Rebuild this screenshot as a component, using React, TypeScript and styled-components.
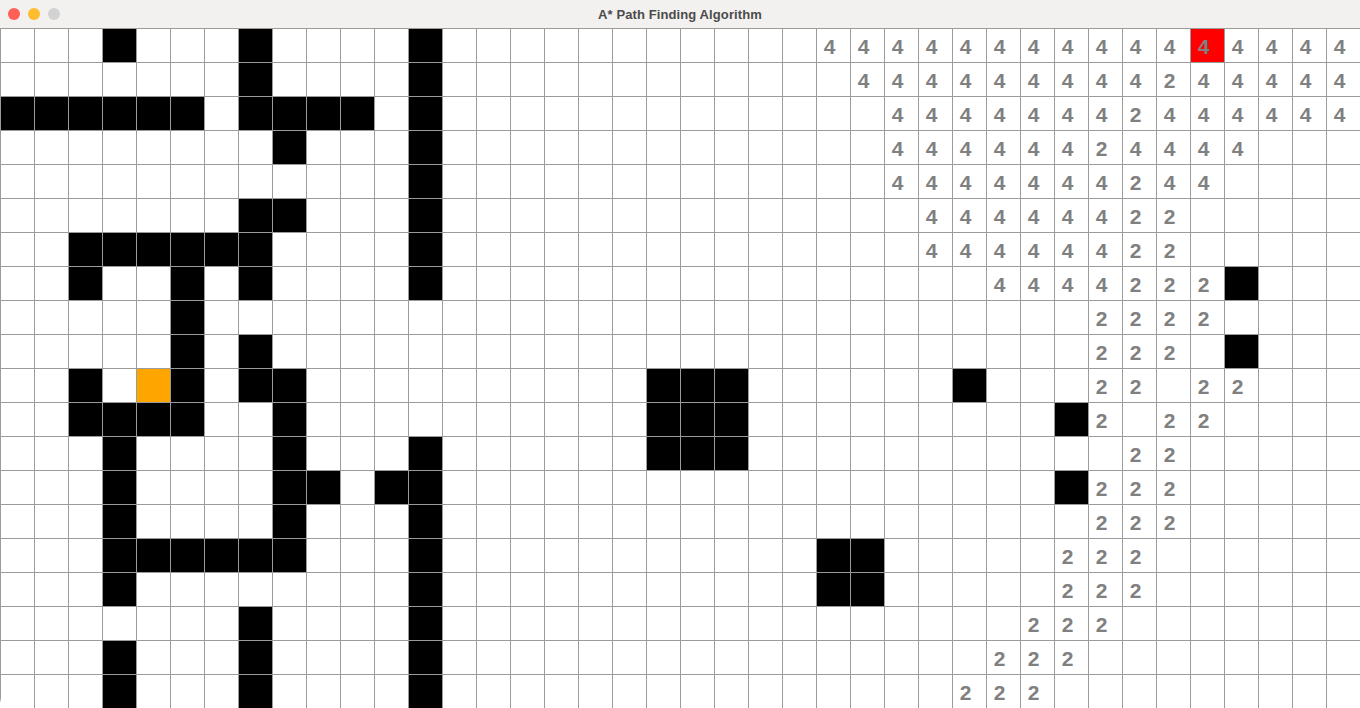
import React from "react";
import styled, { createGlobalStyle } from "styled-components";

const GlobalStyle = createGlobalStyle`
  html, body { margin: 0; padding: 0; background: #ffffff; overflow: hidden; }
  * { box-sizing: border-box; }
`;

const COLS = 40;
const ROWS = 20;

type Kind = "empty" | "wall" | "start" | "goal";

const walls: Record<number, number[]> = {
  0: [3, 7, 12],
  1: [7, 12],
  2: [0, 1, 2, 3, 4, 5, 7, 8, 9, 10, 12],
  3: [8, 12],
  4: [12],
  5: [7, 8, 12],
  6: [2, 3, 4, 5, 6, 7, 12],
  7: [2, 5, 7, 12, 36],
  8: [5],
  9: [5, 7, 36],
  10: [2, 5, 7, 8, 19, 20, 21, 28],
  11: [2, 3, 4, 5, 8, 19, 20, 21, 31],
  12: [3, 8, 12, 19, 20, 21],
  13: [3, 8, 9, 11, 12, 31],
  14: [3, 8, 12],
  15: [3, 4, 5, 6, 7, 8, 12, 24, 25],
  16: [3, 12, 24, 25],
  17: [7, 12],
  18: [3, 7, 12],
  19: [3, 7, 12],
};

const range = (a: number, b: number) => Array.from({ length: b - a + 1 }, (_, i) => a + i);

const fours: Record<number, number[]> = {
  0: range(24, 39),
  1: [...range(25, 33), ...range(35, 39)],
  2: [...range(26, 32), ...range(34, 39)],
  3: [...range(26, 31), ...range(33, 36)],
  4: [...range(26, 32), 34, 35],
  5: range(27, 32),
  6: range(27, 32),
  7: range(29, 32),
};

const twos: Record<number, number[]> = {
  1: [34],
  2: [33],
  3: [32],
  4: [33],
  5: [33, 34],
  6: [33, 34],
  7: [33, 34, 35],
  8: [32, 33, 34, 35],
  9: [32, 33, 34],
  10: [32, 33, 35, 36],
  11: [32, 34, 35],
  12: [33, 34],
  13: [32, 33, 34],
  14: [32, 33, 34],
  15: [31, 32, 33],
  16: [31, 32, 33],
  17: [30, 31, 32],
  18: [29, 30, 31],
  19: [28, 29, 30],
};

const Window = styled.div`
  width: 100vw;
  height: 100vh;
  display: flex;
  flex-direction: column;
  background: #ffffff;
  border-radius: 0 0 10px 10px;
  overflow: hidden;
`;

const TitleBar = styled.div`
  position: relative;
  height: 28px;
  flex: 0 0 28px;
  display: flex;
  align-items: center;
  justify-content: center;
  background: #f2f1f0;
`;

const Lights = styled.div`
  position: absolute;
  left: 8px;
  top: 8px;
  display: flex;
  gap: 8px;
`;

const Light = styled.span<{ $color: string }>`
  width: 12px;
  height: 12px;
  border-radius: 50%;
  background: ${(p) => p.$color};
`;

const Title = styled.div`
  font-family: "Liberation Sans", Arial, sans-serif;
  font-weight: 700;
  font-size: 13px;
  color: #4b4b4b;
  letter-spacing: 0.1px;
`;

const Board = styled.div`
  display: grid;
  grid-template-columns: repeat(${COLS}, 34px);
  grid-auto-rows: 34px;
`;

const bg: Record<Kind, string> = {
  empty: "#ffffff",
  wall: "#000000",
  start: "#ffa500",
  goal: "#ff0000",
};

const Cell = styled.div<{ $kind: Kind }>`
  border-left: 1px solid #9b9b9b;
  border-top: 1px solid #9b9b9b;
  background: ${(p) => bg[p.$kind]};
  display: flex;
  align-items: center;
  justify-content: center;
  font-family: "Liberation Sans", Arial, sans-serif;
  font-weight: 700;
  font-size: 21px;
  line-height: 1;
  color: #808080;
  padding-top: 2px;
  padding-right: 8px;
`;

export default function App() {
  const cells: React.ReactNode[] = [];
  for (let r = 0; r < ROWS; r++) {
    for (let c = 0; c < COLS; c++) {
      let kind: Kind = "empty";
      if (walls[r]?.includes(c)) kind = "wall";
      if (r === 10 && c === 4) kind = "start";
      if (r === 0 && c === 35) kind = "goal";
      let label = "";
      if (fours[r]?.includes(c)) label = "4";
      if (twos[r]?.includes(c)) label = "2";
      cells.push(
        <Cell key={`${r}-${c}`} $kind={kind}>
          {label}
        </Cell>
      );
    }
  }
  return (
    <>
      <GlobalStyle />
      <Window>
        <TitleBar>
          <Lights>
            <Light $color="#fe5f57" />
            <Light $color="#febc2e" />
            <Light $color="#d3d2d2" />
          </Lights>
          <Title>A* Path Finding Algorithm</Title>
        </TitleBar>
        <Board>{cells}</Board>
      </Window>
    </>
  );
}
